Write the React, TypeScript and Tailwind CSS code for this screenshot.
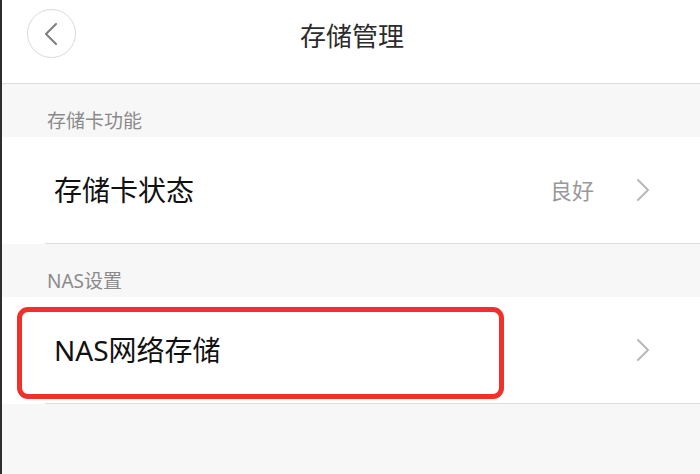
const font = { fontFamily: '"Noto Sans", "Noto Sans CJK SC", sans-serif' };

function Chevron({ dir, className }: { dir: "left" | "right"; className: string }) {
  return (
    <svg width="14" height="22" viewBox="0 0 14 22" fill="none" className={className}>
      <polyline
        points={dir === "left" ? "12,1 2,11 12,21" : "2,1 12,11 2,21"}
        stroke="currentColor"
        strokeWidth="2"
        strokeLinecap="round"
        strokeLinejoin="round"
      />
    </svg>
  );
}

function SectionLabel({ text }: { text: string }) {
  return (
    <div className="h-[53px] flex items-end pl-[45px] pb-[6px]">
      <span className="text-[19px] leading-none text-[#8a8a8a]">{text}</span>
    </div>
  );
}

export default function App() {
  return (
    <div
      className="w-[700px] h-[474px] bg-[#f7f7f7] border-l-2 border-[#2e2e2e] overflow-hidden flex flex-col"
      style={font}
    >
      {/* Header */}
      <div className="h-[84px] bg-white border-b border-[#dcdcdc] grid grid-cols-[1fr_auto_1fr] items-start pt-[9px] shrink-0">
        <div className="pl-[25px]">
          <button className="w-[49px] h-[49px] rounded-full border border-[#d9d9d9] flex items-center justify-center">
            <Chevron dir="left" className="text-[#7d7d7d] -ml-[2px]" />
          </button>
        </div>
        <h1 className="text-[26px] leading-none text-[#2b2b2b] mt-[14px] ml-[2px]">存储管理</h1>
        <div />
      </div>

      <SectionLabel text="存储卡功能" />

      {/* Row 1 */}
      <div className="bg-white h-[106px] flex items-center pl-[52px] pr-[50px]">
        <span className="text-[28px] leading-none text-[#111] flex-1">存储卡状态</span>
        <span className="text-[22px] leading-none text-[#999] mr-[42px]">良好</span>
        <Chevron dir="right" className="text-[#b8b8b8]" />
      </div>
      <div className="h-px bg-white">
        <div className="ml-[43px] h-px bg-[#dedede]" />
      </div>

      <SectionLabel text="NAS设置" />

      {/* Row 2 */}
      <div className="bg-white h-[106px] flex items-center pl-[52px] pr-[50px] relative">
        <span className="text-[28px] leading-none text-[#111] flex-1">NAS网络存储</span>
        <Chevron dir="right" className="text-[#b8b8b8]" />
        <div className="absolute left-[15px] top-[10px] w-[487px] h-[92px] border-[5px] border-[#f2302a] rounded-[11px]" />
      </div>
      <div className="h-px bg-white">
        <div className="ml-[43px] h-px bg-[#dedede]" />
      </div>
    </div>
  );
}
